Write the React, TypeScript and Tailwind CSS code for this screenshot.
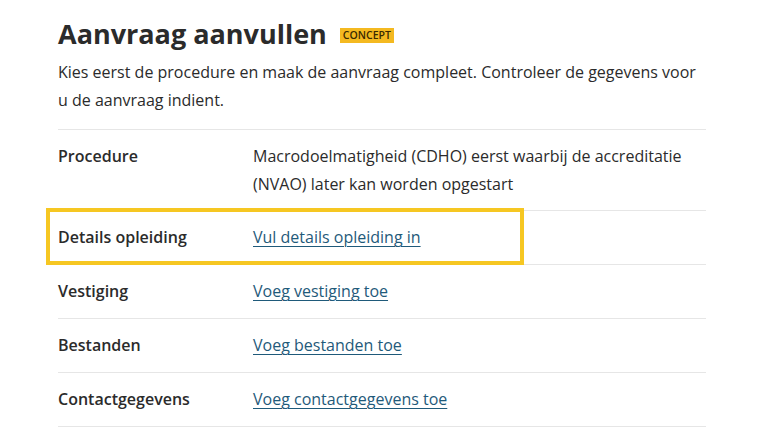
export default function App() {
  const rows: { label: string; value: string; link?: boolean; highlight?: boolean }[] = [
    { label: "Details opleiding", value: "Vul details opleiding in", link: true, highlight: true },
    { label: "Vestiging", value: "Voeg vestiging toe", link: true },
    { label: "Bestanden", value: "Voeg bestanden toe", link: true },
    { label: "Contactgegevens", value: "Voeg contactgegevens toe", link: true },
  ];
  return (
    <div className="min-h-[439px] w-[766px] bg-white text-[#2b2b2b]" style={{ fontFamily: '"Open Sans", sans-serif' }}>
      <div className="pl-[58px] pt-[15px] w-[706px]">
        <div className="flex items-center gap-[13px]">
          <h1 className="text-[27px] font-bold leading-[37px] text-[#2b2b2b]">Aanvraag aanvullen</h1>
          <span className="mt-[3px] bg-[#f4b920] px-[3px] text-[10.5px] font-semibold leading-[15px] text-[#3a2a00]">CONCEPT</span>
        </div>
        <p className="mt-[6px] text-[16px] leading-[28px]">
          Kies eerst de procedure en maak de aanvraag compleet. Controleer de gegevens voor u de aanvraag indient.
        </p>
        <div className="mt-[15px] border-t border-[#e6e6e6]">
          <div className="flex border-b border-[#e6e6e6] py-[12px]">
            <div className="w-[195px] shrink-0 text-[16px] font-semibold leading-[28px]">Procedure</div>
            <div className="text-[16px] leading-[28px]">
              Macrodoelmatigheid (CDHO) eerst waarbij de accreditatie (NVAO) later kan worden opgestart
            </div>
          </div>
          {rows.map((r) => (
            <div key={r.label} className="relative flex border-b border-[#e6e6e6] py-[13px]">
              {r.highlight && (
                <div className="pointer-events-none absolute left-[-12px] top-[-3px] h-[57px] w-[478px] border-[4px] border-[#f6c722]" />
              )}
              <div className="w-[195px] shrink-0 text-[16px] font-semibold leading-[27px]">{r.label}</div>
              <a href="#" className="text-[16px] leading-[27px] text-[#1f5a7a] underline underline-offset-[3px] decoration-1">
                {r.value}
              </a>
            </div>
          ))}
        </div>
      </div>
    </div>
  );
}
